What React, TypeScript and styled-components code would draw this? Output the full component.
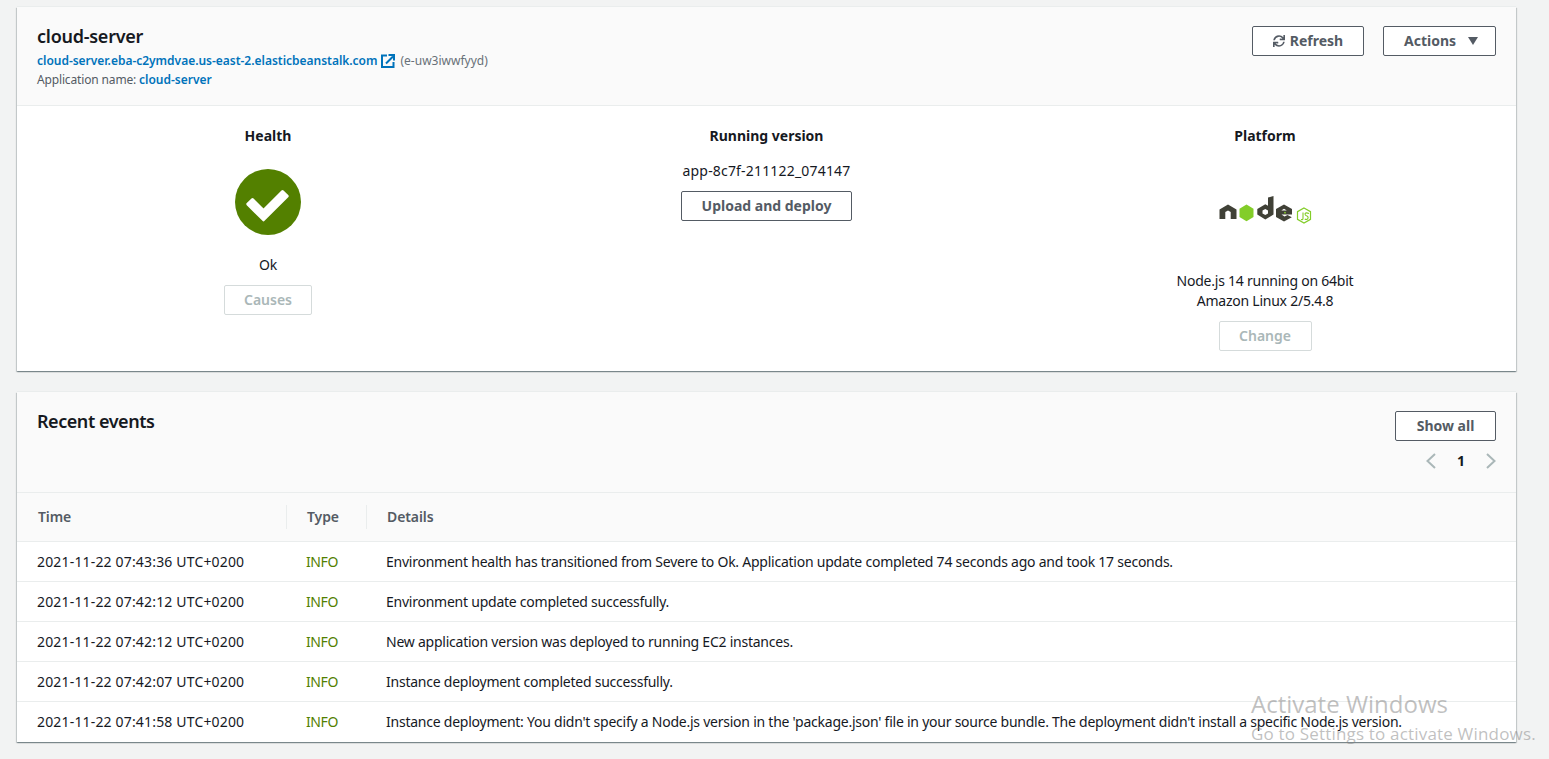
import styled, { createGlobalStyle } from "styled-components";
import { FaSync } from "react-icons/fa";

const events = [
  ["2021-11-22 07:43:36 UTC+0200", "Environment health has transitioned from Severe to Ok. Application update completed 74 seconds ago and took 17 seconds."],
  ["2021-11-22 07:42:12 UTC+0200", "Environment update completed successfully."],
  ["2021-11-22 07:42:12 UTC+0200", "New application version was deployed to running EC2 instances."],
  ["2021-11-22 07:42:07 UTC+0200", "Instance deployment completed successfully."],
  ["2021-11-22 07:41:58 UTC+0200", "Instance deployment: You didn't specify a Node.js version in the 'package.json' file in your source bundle. The deployment didn't install a specific Node.js version."],
];

const App = () => {
  return (
    <Page>
      <GlobalStyle />
      <Card>
        <Head>
          <div>
            <Title>cloud-server</Title>
            <UrlLine>
              <Link>cloud-server.eba-c2ymdvae.us-east-2.elasticbeanstalk.com</Link>
              <ExternalIcon viewBox="0 0 14 14">
                <path d="M6 1.500H1v11.500h11.500V8" fill="none" stroke="#0073bb" strokeWidth="2" />
                <path d="M5 9.500 12 2.500M7.500 1h5.500v5.500" fill="none" stroke="#0073bb" strokeWidth="2" />
              </ExternalIcon>
              <EnvId>(e-uw3iwwfyyd)</EnvId>
            </UrlLine>
            <AppLine>
              Application name: <Link>cloud-server</Link>
            </AppLine>
          </div>
          <HeadActions>
            <Button $width={112}>
              <FaSync size={12} /> Refresh
            </Button>
            <Button $width={113}>
              Actions <Caret />
            </Button>
          </HeadActions>
        </Head>
        <Overview>
          <Column>
            <ColumnTitle>Health</ColumnTitle>
            <HealthIcon viewBox="0 0 66 66">
              <circle cx="33" cy="33" r="33" fill="#538000" />
              <path d="M17.500 30.500 28.500 41.500 47.500 22.500 52.150 27.150 28.500 50.800 12.800 35.100Z" fill="#fff" stroke="#fff" strokeWidth="3" strokeLinejoin="round" />
            </HealthIcon>
            <ColumnText $top={20}>Ok</ColumnText>
            <Button $width={88} $disabled $top={10}>Causes</Button>
          </Column>
          <Column>
            <ColumnTitle>Running version</ColumnTitle>
            <VersionText>app-8c7f-211122_074147</VersionText>
            <Button $width={171} $top={10}>Upload and deploy</Button>
          </Column>
          <Column>
            <ColumnTitle>Platform</ColumnTitle>
            <NodeLogo viewBox="0 0 93 28">
              <path d="M0.500 23V13.500L9 8.500 17.500 13.500V23H11.700V16L9 14.500 6.300 16V23Z" fill="#404137" />
              <path d="M27.500 8.500 34.500 12.700V21L27.500 25.200 20.500 21V12.700Z" fill="#83cd29" />
              <path fillRule="evenodd" d="M54.500 0V18.500L46.300 23.500 38.300 18.500V13L46.300 8.300 49 9.800V1.500ZM46.300 13 43.500 14.600V17.400L46.300 19 49 17.400V14.600Z" fill="#404137" />
              <path fillRule="evenodd" d="M65 8.500 73 13V18.500H62.500L65.500 20.500 68.500 19 72.800 21.200 65 25.500 57 21V13ZM65 12.800 62.300 14.500H67.800Z" fill="#404137" />
              <circle cx="66" cy="16.700" r="0.900" fill="#83cd29" />
              <path d="M85 12 91.500 15.700V23.300L85 27 78.500 23.300V15.700Z" fill="none" stroke="#83cd29" strokeWidth="1.200" />
              <path d="M84 16.500V22.500Q84 24 82 23.500M90 17.500Q86.500 16 86 18Q86 19.500 88 20Q90 21 88.500 23Q87 24 85.800 23" fill="none" stroke="#83cd29" strokeWidth="1.100" />
            </NodeLogo>
            <PlatformText>
              Node.js 14 running on 64bit
              <br />
              Amazon Linux 2/5.4.8
            </PlatformText>
            <Button $width={93} $disabled $top={10}>Change</Button>
          </Column>
        </Overview>
      </Card>
      <Card $gap>
        <EventsHead>
          <Heading>Recent events</Heading>
          <EventsControls>
            <Button $width={101}>Show all</Button>
            <Pager>
              <Chevron viewBox="0 0 10 16">
                <path d="M9 1 1.500 8 9 15" />
              </Chevron>
              <PageNumber>1</PageNumber>
              <Chevron viewBox="0 0 10 16">
                <path d="M1 1 8.500 8 1 15" />
              </Chevron>
            </Pager>
          </EventsControls>
        </EventsHead>
        <TableHead>
          <HeadCell $width={270} $pad={21}>Time</HeadCell>
          <HeadCell $width={80}>Type</HeadCell>
          <HeadCell $last>Details</HeadCell>
        </TableHead>
        {events.map(([time, details], i) => (
          <Row key={i}>
            <TimeCell>{time}</TimeCell>
            <InfoCell>INFO</InfoCell>
            <DetailCell>{details}</DetailCell>
          </Row>
        ))}
      </Card>
      <Watermark>
        <WatermarkTitle>Activate Windows</WatermarkTitle>
        <WatermarkText>Go to Settings to activate Windows.</WatermarkText>
      </Watermark>
    </Page>
  );
};

export default App;

const GlobalStyle = createGlobalStyle`
  html, body {
    margin: 0;
    padding: 0;
    background: #f2f3f3;
    overflow: hidden;
  }
  * {
    box-sizing: border-box;
  }
`;

const Page = styled.div`
  position: relative;
  width: 1549px;
  height: 759px;
  padding: 7px 33px 0 17px;
  background: #f2f3f3;
  font-family: "Noto Sans", "Open Sans", sans-serif;
  font-size: 14px;
  line-height: 20px;
  letter-spacing: -0.24px;
  color: #16191f;
`;

const Card = styled.div<{ $gap?: boolean }>`
  background: #fff;
  margin-top: ${(p) => (p.$gap ? "21px" : "0")};
  box-shadow: 0 1px 1px 0 rgba(0, 28, 36, 0.3), 1px 1px 1px 0 rgba(0, 28, 36, 0.15), -1px 1px 1px 0 rgba(0, 28, 36, 0.15), 0 -1px 0 0 #eaeded;
`;

const Head = styled.div`
  height: 99px;
  padding: 18px 20px 0;
  display: flex;
  justify-content: space-between;
  background: #fafafa;
  border-bottom: 1px solid #eaeded;
`;

const Title = styled.div`
  font-size: 18px;
  line-height: 22px;
  font-weight: 600;
  letter-spacing: -0.25px;
`;

const UrlLine = styled.div`
  display: flex;
  align-items: center;
  margin-top: 5px;
  font-size: 12px;
  line-height: 18px;
  letter-spacing: 0;
`;

const Link = styled.span`
  color: #0073bb;
  font-size: 12px;
  font-weight: 600;
  letter-spacing: -0.02px;
`;

const ExternalIcon = styled.svg`
  width: 14px;
  height: 14px;
  margin-left: 4px;
`;

const EnvId = styled.span`
  margin-left: 5px;
  color: #687078;
`;

const AppLine = styled.div`
  font-size: 12px;
  line-height: 18px;
  margin-top: 1px;
  color: #545b64;
  letter-spacing: -0.15px;
`;

const HeadActions = styled.div`
  display: flex;
  gap: 19px;
  padding-top: 1px;
`;

const Button = styled.div<{ $width: number; $disabled?: boolean; $top?: number }>`
  display: flex;
  align-items: center;
  justify-content: center;
  gap: 5px;
  width: ${(p) => p.$width}px;
  height: 30px;
  margin-top: ${(p) => p.$top ?? 0}px;
  background: #fff;
  border: 1px solid ${(p) => (p.$disabled ? "#d5dbdb" : "#545b64")};
  border-radius: 2px;
  color: ${(p) => (p.$disabled ? "#aab7b8" : "#545b64")};
  font-size: 14px;
  font-weight: ${(p) => (p.$disabled ? 600 : 700)};
  letter-spacing: 0;
`;

const Caret = styled.span`
  width: 0;
  height: 0;
  margin-left: 7px;
  margin-right: -3px;
  border-left: 5.5px solid transparent;
  border-right: 5.5px solid transparent;
  border-top: 8px solid #545b64;
`;

const Overview = styled.div`
  height: 265px;
  display: grid;
  grid-template-columns: 502px 495px 1fr;
  padding-top: 20px;
`;

const Column = styled.div`
  display: flex;
  flex-direction: column;
  align-items: center;
  text-align: center;
`;

const ColumnTitle = styled.div`
  font-weight: 700;
  letter-spacing: 0;
`;

const ColumnText = styled.div<{ $top: number }>`
  margin-top: ${(p) => p.$top}px;
`;

const VersionText = styled.div`
  margin-top: 15px;
  letter-spacing: 0.18px;
`;

const HealthIcon = styled.svg`
  width: 66px;
  height: 66px;
  margin-top: 23px;
`;

const NodeLogo = styled.svg`
  width: 93px;
  height: 28px;
  margin-top: 50px;
`;

const PlatformText = styled.div`
  margin-top: 47px;
`;

const EventsHead = styled.div`
  height: 101px;
  padding: 18px 20px 0;
  display: flex;
  justify-content: space-between;
  background: #fafafa;
  border-bottom: 1px solid #eaeded;
`;

const Heading = styled.div`
  font-size: 18px;
  line-height: 22px;
  font-weight: 600;
  letter-spacing: -0.45px;
`;

const EventsControls = styled.div`
  display: flex;
  flex-direction: column;
  align-items: flex-end;
  padding-top: 1px;
`;

const Pager = styled.div`
  display: flex;
  align-items: center;
  margin-top: 10px;
`;

const Chevron = styled.svg`
  width: 10px;
  height: 16px;
  fill: none;
  stroke: #aab7b8;
  stroke-width: 2;
`;

const PageNumber = styled.div`
  width: 50px;
  text-align: center;
  font-weight: 700;
`;

const TableHead = styled.div`
  height: 49px;
  display: flex;
  align-items: center;
  background: #fafafa;
  border-bottom: 1px solid #eaeded;
  color: #545b64;
  font-weight: 600;
  letter-spacing: -0.1px;
`;

const HeadCell = styled.div<{ $width?: number; $last?: boolean; $pad?: number }>`
  width: ${(p) => (p.$width ? `${p.$width}px` : "auto")};
  height: 24px;
  line-height: 24px;
  padding-left: ${(p) => p.$pad ?? 20}px;
  border-right: ${(p) => (p.$last ? "none" : "1px solid #eaeded")};
`;

const Row = styled.div`
  height: 40px;
  display: flex;
  align-items: center;
  border-bottom: 1px solid #eaeded;
  white-space: nowrap;
  &:last-child {
    border-bottom: none;
  }
`;

const TimeCell = styled.div`
  width: 270px;
  padding-left: 20px;
  letter-spacing: 0.17px;
`;

const InfoCell = styled.div`
  width: 80px;
  padding-left: 19px;
  color: #538000;
  letter-spacing: -0.4px;
`;

const DetailCell = styled.div`
  padding-left: 19px;
`;

const Watermark = styled.div`
  position: absolute;
  left: 1251px;
  top: 689px;
  color: rgba(130, 130, 130, 0.5);
  font-family: "Open Sans", sans-serif;
  letter-spacing: 0;
  white-space: nowrap;
`;

const WatermarkTitle = styled.div`
  font-size: 24px;
  line-height: 30px;
`;

const WatermarkText = styled.div`
  font-size: 17px;
  line-height: 30px;
  letter-spacing: 0.18px;
`;
